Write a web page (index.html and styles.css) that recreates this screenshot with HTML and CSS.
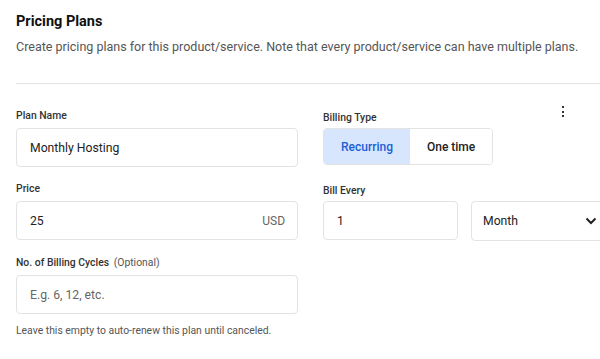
FILE: index.html
```html
<!DOCTYPE html>
<html>
<head>
  <title>Pricing Plans</title>
  <link rel="stylesheet" href="styles.css">
</head>
<body>

<div class="page">
  <h1 class="title">Pricing Plans</h1>
  <p class="subtitle">Create pricing plans for this product/service. Note that every product/service can have multiple plans.</p>
  <hr class="divider">

  <form class="plan-form" action="#" method="post">
    <button type="button" class="menu-btn" aria-label="More">
      <span></span><span></span><span></span>
    </button>

    <div class="field">
      <label for="id_name">Plan Name</label>
      <input type="text" class="box" id="id_name" value="Monthly Hosting">
    </div>

    <div class="field right">
      <label>Billing Type</label>
      <div class="toggle">
        <button type="button" class="seg active">Recurring</button>
        <button type="button" class="seg">One time</button>
      </div>
    </div>

    <div class="field">
      <label for="id_price">Price</label>
      <div class="box price">
        <input type="text" id="id_price" value="25">
        <span class="unit">USD</span>
      </div>
    </div>

    <div class="field right">
      <label for="id_every">Bill Every</label>
      <div class="every">
        <input type="text" class="box" id="id_every" value="1">
        <div class="box select">
          <span>Month</span>
          <svg width="12" height="8" viewBox="0 0 12 8"><path d="M1.5 1.5 L6 6 L10.5 1.5" fill="none" stroke="#222" stroke-width="2"/></svg>
        </div>
      </div>
    </div>

    <div class="field">
      <label for="id_cycles">No. of Billing Cycles <span class="optional">(Optional)</span></label>
      <input type="text" class="box" id="id_cycles" placeholder="E.g. 6, 12, etc.">
      <p class="help">Leave this empty to auto-renew this plan until canceled.</p>
    </div>
  </form>
</div>

</body>
</html>
```

FILE: styles.css
```css
html, body {
  margin: 0;
  overflow: hidden;
  background: #fff;
}

body {
  font-family: Roboto, "Liberation Sans", sans-serif;
  color: #222;
}

.page {
  width: 589px;
  padding: 12px 0 0 16px;
}

.title {
  margin: 0;
  font-size: 14.5px;
  line-height: 20px;
  font-weight: 700;
  color: #111;
}

.subtitle {
  margin: 6px 0 0 0;
  font-size: 12.5px;
  line-height: 18px;
  color: #555;
}

.divider {
  margin: 27px 0 0 0;
  border: none;
  border-top: 1px solid #e2e2e2;
  width: 600px;
}

.plan-form {
  position: relative;
  display: grid;
  grid-template-columns: 282px 282px;
  column-gap: 25px;
  row-gap: 15px;
  padding-top: 25px;
}

.menu-btn {
  position: absolute;
  left: 545px;
  top: 22px;
  width: 4px;
  height: 11px;
  padding: 0;
  border: none;
  background: none;
  display: flex;
  flex-direction: column;
  align-items: center;
  justify-content: space-between;
}

.menu-btn span {
  width: 2px;
  height: 2px;
  background: #333;
}

.field label {
  display: block;
  font-size: 10.4px;
  line-height: 14px;
  font-weight: 500;
  color: #333;
  margin-bottom: 5px;
}

.field.right label {
  padding-top: 2px;
  margin-bottom: 3px;
}

.optional {
  font-weight: 400;
  color: #555;
  margin-left: 2px;
}

.box {
  box-sizing: border-box;
  height: 39px;
  width: 100%;
  border: 1px solid #e3e3e3;
  border-radius: 4px;
  padding: 0 12px 0 13px;
  font: 12.2px Roboto, "Liberation Sans", sans-serif;
  color: #222;
  background: #fff;
}

.box::placeholder {
  color: #666;
}

.price {
  display: flex;
  align-items: center;
}

.price input {
  flex: 1;
  border: none;
  padding: 0;
  font: 12.2px Roboto, "Liberation Sans", sans-serif;
  color: #222;
  outline: none;
}

.unit {
  font-size: 12px;
  color: #666;
}

.toggle {
  display: inline-flex;
  height: 37px;
  border: 1px solid #e3e3e3;
  border-radius: 4px;
  box-sizing: border-box;
  overflow: hidden;
}

.seg {
  border: none;
  background: #fff;
  padding: 0 17px;
  font: 500 12px Roboto, "Liberation Sans", sans-serif;
  color: #222;
}

.seg.active {
  background: #d7e5fd;
  color: #1b5fd6;
}

.every {
  display: flex;
  gap: 13px;
}

.every .box {
  width: 135px;
}

.every .select {
  display: flex;
  align-items: center;
  justify-content: space-between;
  height: 40px;
  width: 134px;
  padding: 0 7px 0 11px;
}

.help {
  margin: 10px 0 0 0;
  font-size: 10.4px;
  line-height: 14px;
  color: #555;
}
```
